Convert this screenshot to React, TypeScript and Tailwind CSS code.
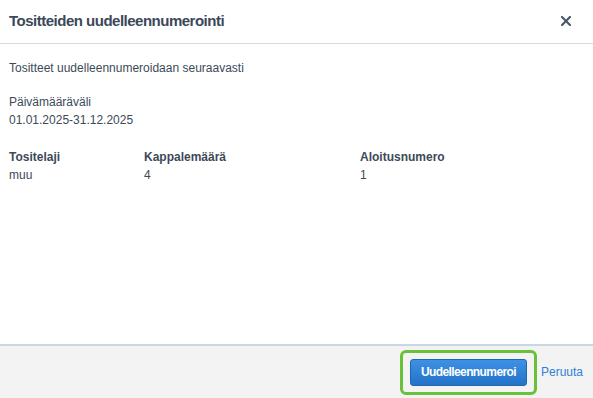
import React from 'react';

interface Row {
  laji: string;
  maara: string;
  alku: string;
}

const App: React.FC = () => {
  const rows: Row[] = [{ laji: 'muu', maara: '4', alku: '1' }];

  return (
    <div className="flex h-[398px] w-[593px] flex-col bg-white font-['Liberation_Sans',Arial,sans-serif] text-[#3c4a59]">
      {/* Header */}
      <div className="flex h-[44px] shrink-0 items-center justify-between border-b border-[#d3dbe3] pl-[9px] pr-[22px]">
        <h1 className="text-[15px] font-bold tracking-[-0.5px] text-[#3b4858]">Tositteiden uudelleennumerointi</h1>
        <svg width="10" height="10" viewBox="0 0 10 10" className="mt-[-2px]">
          <path d="M1 1 L9 9 M9 1 L1 9" stroke="#4a5a6b" strokeWidth="2.2" strokeLinecap="square" />
        </svg>
      </div>

      {/* Body */}
      <div className="flex-1 px-[9px] pt-[15px] text-[12px] leading-[18px]">
        <p>Tositteet uudelleennumeroidaan seuraavasti</p>
        <div className="mt-[16px]">
          <p>Päivämääräväli</p>
          <p>01.01.2025-31.12.2025</p>
        </div>
        <div className="mt-[19px] grid grid-cols-[135px_216px_1fr]">
          <div className="font-bold">Tositelaji</div>
          <div className="font-bold">Kappalemäärä</div>
          <div className="font-bold">Aloitusnumero</div>
          {rows.map((r, i) => (
            <React.Fragment key={i}>
              <div>{r.laji}</div>
              <div>{r.maara}</div>
              <div>{r.alku}</div>
            </React.Fragment>
          ))}
        </div>
      </div>

      {/* Footer */}
      <div className="flex h-[54px] shrink-0 items-center justify-end border-t-2 border-[#c9d7e5] bg-[#f3f3f3] pr-[10px]">
        <div className="rounded-[6px] border-[3px] border-[#67c23a] px-[7px] py-[6px]">
          <button className="h-[27px] w-[117px] rounded-[3px] border border-[#1f66b3] bg-gradient-to-b from-[#3d91e3] to-[#2373c9] text-[12px] font-bold tracking-[-0.6px] text-white">
            Uudelleennumeroi
          </button>
        </div>
        <a className="ml-[4px] text-[12px] text-[#2f80d6]">Peruuta</a>
      </div>
    </div>
  );
};

export default App;
